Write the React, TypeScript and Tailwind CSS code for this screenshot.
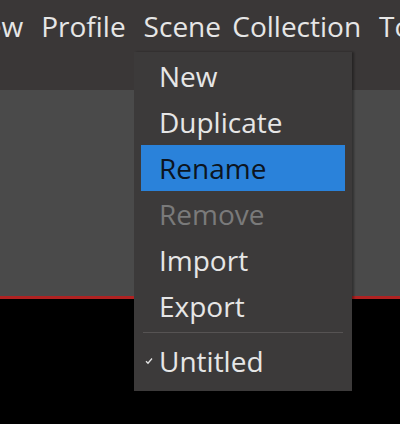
import React from 'react'

const items = [
  { label: 'New' },
  { label: 'Duplicate' },
  { label: 'Rename', active: true },
  { label: 'Remove', disabled: true },
  { label: 'Import' },
  { label: 'Export' },
]

function Check() {
  return (
    <svg width="8" height="8" viewBox="0 0 8 8" className="absolute left-[4px] top-[19px]">
      <path d="M1 4.2 L3 6.2 L7 1.5" fill="none" stroke="#e4e4e4" strokeWidth="1.3" />
    </svg>
  )
}

export default function App() {
  return (
    <div
      className="relative w-[400px] h-[424px] overflow-hidden bg-[#3a3737] text-[#e6e6e6] text-[28px] leading-none"
      style={{ fontFamily: '"Open Sans", "Noto Sans", sans-serif' }}
    >
      {/* menu bar */}
      <div className="flex h-[52px] items-center gap-[18px] ml-[-38px] whitespace-nowrap">
        <span>View</span>
        <span>Profile</span>
        <span className="[word-spacing:4px]">Scene Collection</span>
        <span>Tools</span>
      </div>

      {/* main area */}
      <div className="mt-[38px] h-[206px] bg-[#4a4a4a]" />
      <div className="h-[3px] bg-[#b02222]" />
      <div className="h-[200px] bg-black" />

      {/* dropdown */}
      <div className="absolute left-[134px] top-[52px] w-[218px] h-[339px] bg-[#3c3a3a] pt-px shadow-[2px_0_2px_rgba(0,0,0,0.35)]">
        {items.map(it => (
          <div
            key={it.label}
            className={`mx-[7px] h-[46px] flex items-center pl-[18px] ${
              it.active ? 'bg-[#2a82da] text-[#0c1420]' : it.disabled ? 'text-[#7a7a7a]' : ''
            }`}
          >
            {it.label}
          </div>
        ))}
        <div className="mx-[9px] mt-[3px] h-px bg-[#565353]" />
        <div className="relative mx-[7px] mt-[5px] h-[46px] flex items-center pl-[18px]">
          <Check />
          Untitled
        </div>
      </div>
    </div>
  )
}
